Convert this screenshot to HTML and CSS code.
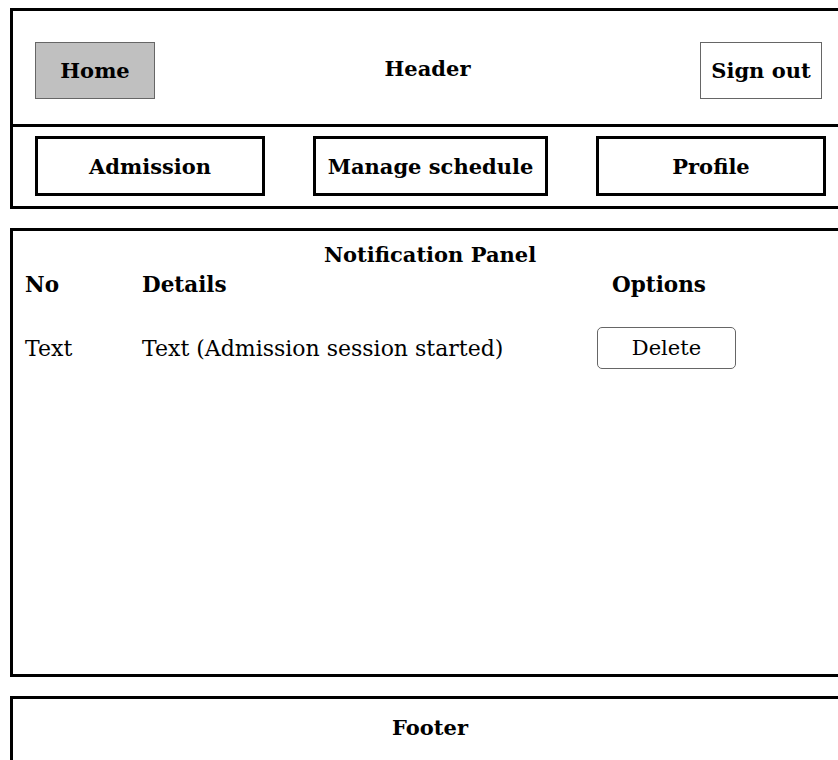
FILE: index.html
```html
<!DOCTYPE html>
<html lang="en">
<head>
    <meta charset="UTF-8">
    <meta name="viewport" content="width=device-width, initial-scale=1.0">
    <title>Home</title>
    <link rel="stylesheet" href="styles.css">
</head>
<body>
    <div id="wrapper">
        <div class="topbox">
            <div class="headerRow">
                <a class="btnHome" href="#">Home</a>
                <span class="title">Header</span>
                <a class="btnSignout" href="#">Sign out</a>
            </div>
            <nav class="navRow">
                <a class="navBtn" href="#">Admission</a>
                <a class="navBtn wide" href="#">Manage schedule</a>
                <a class="navBtn" href="#">Profile</a>
            </nav>
        </div>

        <div class="panel">
            <h2>Notification Panel</h2>
            <table>
                <tr>
                    <th class="colNo">No</th>
                    <th class="colDetails">Details</th>
                    <th class="colOptions">Options</th>
                </tr>
                <tr>
                    <td>Text</td>
                    <td>Text (Admission session started)</td>
                    <td><button>Delete</button></td>
                </tr>
            </table>
        </div>

        <div class="footer">Footer</div>
    </div>
</body>
</html>
```

FILE: styles.css
```css
html {
    overflow: hidden;
}

body {
    margin: 0;
    font-family: "DejaVu Serif", serif;
    color: black;
}

#wrapper {
    width: 840px;
    margin: 8px 0 0 10px;
}

a {
    color: black;
    text-decoration: none;
}

.topbox {
    border: 3px solid black;
}

.headerRow {
    height: 107px;
    display: flex;
    align-items: center;
    justify-content: space-between;
    padding: 6px 25px 0 22px;
    border-bottom: 3px solid black;
    font-weight: bold;
    font-size: 21px;
}

.title {
    margin-bottom: 5px;
}

.btnHome,
.btnSignout {
    height: 55px;
    display: flex;
    align-items: center;
    justify-content: center;
    border: 1px solid #666;
}

.btnHome {
    width: 118px;
    background-color: #c0c0c0;
}

.btnSignout {
    width: 120px;
}

.navRow {
    display: flex;
    justify-content: space-between;
    padding: 9px 21px 10px 22px;
}

.navBtn {
    width: 224px;
    height: 54px;
    display: flex;
    align-items: center;
    justify-content: center;
    border: 3px solid black;
    font-weight: bold;
    font-size: 21px;
}

.navBtn.wide {
    width: 229px;
}

.panel {
    margin-top: 19px;
    height: 443px;
    border: 3px solid black;
    padding: 0 12px;
}

.panel h2 {
    margin: 12px 0 0;
    text-align: center;
    font-size: 21px;
    line-height: 24px;
}

table {
    border-collapse: collapse;
    font-size: 22px;
}

th {
    text-align: left;
    padding: 4px 0 0;
    line-height: 28px;
    font-size: 21.5px;
}

td {
    padding: 28px 0 0;
    vertical-align: middle;
}

.colNo {
    width: 117px;
}

.colDetails {
    width: 470px;
}

button {
    width: 139px;
    height: 42px;
    margin-left: -15px;
    font-family: "DejaVu Serif", serif;
    font-size: 21px;
    background: white;
    border: 1px solid #666;
    border-radius: 5px;
}

.footer {
    margin-top: 19px;
    height: 80px;
    border: 3px solid black;
    text-align: center;
    font-weight: bold;
    font-size: 21px;
    padding-top: 16px;
}
```
